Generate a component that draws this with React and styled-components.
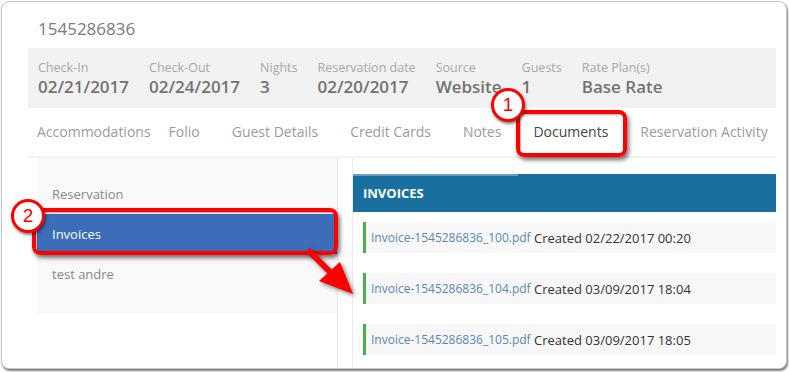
import React from 'react'
import styled, {createGlobalStyle} from 'styled-components'

const GlobalStyle = createGlobalStyle`
  body {
    margin: 0;
    background: #fff;
    font-family: "Open Sans", "Liberation Sans", sans-serif;
  }
`

const info = [
    {label: 'Check-In', value: '02/21/2017'},
    {label: 'Check-Out', value: '02/24/2017'},
    {label: 'Nights', value: '3'},
    {label: 'Reservation date', value: '02/20/2017'},
    {label: 'Source', value: 'Website'},
    {label: 'Guests', value: '1'},
    {label: 'Rate Plan(s)', value: 'Base Rate'},
]

const tabs = ['Accommodations', 'Folio', 'Guest Details', 'Credit Cards', 'Notes', 'Documents', 'Reservation Activity']

const invoices = [
    {file: 'Invoice-1545286836_100.pdf', created: '02/22/2017 00:20'},
    {file: 'Invoice-1545286836_104.pdf', created: '03/09/2017 18:04'},
    {file: 'Invoice-1545286836_105.pdf', created: '03/09/2017 18:05'},
]

export default function App(){
    return (
        <Page>
            <GlobalStyle/>
            <Card>
                <Content>
                    <Title>1545286836</Title>
                    <InfoBar>
                        {info.map(i => (
                            <InfoCol key={i.label}>
                                <Label>{i.label}</Label>
                                <Value>{i.value}</Value>
                            </InfoCol>
                        ))}
                    </InfoBar>
                    <Tabs>
                        {tabs.map(t => <Tab key={t} $active={t === 'Documents'}>{t}</Tab>)}
                    </Tabs>
                    <Body>
                        <SideCol>
                            <SideMenu>
                                <SideItem>Reservation</SideItem>
                                <SideItem $active>Invoices</SideItem>
                                <SideItem>test andre</SideItem>
                            </SideMenu>
                        </SideCol>
                        <Panel>
                            <PanelHeader>INVOICES</PanelHeader>
                            <InvoiceList>
                                {invoices.map(inv => (
                                    <InvoiceRow key={inv.file}>
                                        <FileLink>{inv.file}</FileLink> Created {inv.created}
                                    </InvoiceRow>
                                ))}
                            </InvoiceList>
                        </Panel>
                    </Body>
                </Content>
            </Card>

            <Callout $left={516} $top={110} $w={111} $h={47}/>
            <Callout $left={32} $top={208} $w={306} $h={47}/>
            <Badge $left={491} $top={88}>1</Badge>
            <Badge $left={11} $top={199}>2</Badge>
            <Arrow viewBox="0 0 80 70" width="80" height="70">
                <line x1="18" y1="10" x2="42" y2="34" stroke="#f00" strokeWidth="6"/>
                <polygon points="29,41 50,22 63,54" fill="#f00"/>
            </Arrow>
        </Page>
    )
}

const Page = styled.div`
  position: relative;
  width: 789px;
  height: 372px;
  padding: 1px 0 0 1px;
  box-sizing: border-box;
  overflow: hidden;
`

const Card = styled.div`
  width: 786px;
  height: 368px;
  box-sizing: border-box;
  border: 1px solid #c6c6c6;
  border-radius: 8px;
  box-shadow: 1px 2px 2px rgba(0,0,0,0.5);
  background: #fff;
  overflow: hidden;
`

const Content = styled.div`
  margin-left: 26px;
  width: 748px;
  height: 100%;
  display: flex;
  flex-direction: column;
`

const Title = styled.div`
  height: 46px;
  box-sizing: border-box;
  padding: 6px 0 0 10px;
  display: flex;
  align-items: center;
  font-size: 17px;
  color: #7a7a7a;
`

const InfoBar = styled.div`
  height: 60px;
  box-sizing: border-box;
  background: #f2f2f2;
  padding: 12px 10px 0;
  display: flex;
  gap: 20px;
`

const InfoCol = styled.div`
  display: flex;
  flex-direction: column;
`

const Label = styled.div`
  font-size: 12.5px;
  line-height: 16px;
  color: #a8a8a8;
`

const Value = styled.div`
  font-size: 17px;
  font-weight: 600;
  line-height: 22px;
  color: #727272;
`

const Tabs = styled.div`
  height: 50px;
  box-sizing: border-box;
  padding-bottom: 2px;
  border-bottom: 2px solid #f3f3f3;
  display: flex;
  align-items: center;
`

const Tab = styled.div`
  padding: 0 16px;
  font-size: 14px;
  color: ${p => p.$active ? '#444' : '#9b9b9b'};
  white-space: nowrap;

  &:first-child {
    padding-left: 9px;
    padding-right: 2px;
  }
`

const Body = styled.div`
  flex: 1;
  display: flex;
`

const SideCol = styled.div`
  margin-left: 9px;
  width: 301px;
  box-sizing: border-box;
  border-right: 1px solid #e6e6e6;
`

const SideMenu = styled.div`
  background: #f9f9f9;
  padding: 16px 0 19px;
`

const SideItem = styled.div`
  height: 40px;
  padding-left: 15px;
  display: flex;
  align-items: center;
  font-size: 13px;
  color: ${p => p.$active ? '#fff' : '#888'};
  background: ${p => p.$active ? '#3b6db8' : 'transparent'};
`

const Panel = styled.div`
  flex: 1;
  margin-left: 14px;
  border-left: 1px solid #ececec;
  padding-top: 16px;
`

const PanelHeader = styled.div`
  position: relative;
  height: 38px;
  padding-left: 10px;
  display: flex;
  align-items: center;
  background: #19709f;
  color: #fff;
  font-size: 13px;
  font-weight: 700;

  &::before {
    content: '';
    position: absolute;
    left: 0;
    top: 0;
    width: 165px;
    height: 2px;
    background: #6a9fc2;
  }
`

const InvoiceList = styled.div`
  padding: 10px 0 0 10px;
  display: flex;
  flex-direction: column;
  gap: 20px;
`

const InvoiceRow = styled.div`
  height: 31px;
  box-sizing: border-box;
  padding-left: 5px;
  border-left: 3px solid #4cae50;
  background: #f7f7f7;
  display: flex;
  align-items: center;
  font-size: 13px;
  color: #333;
  white-space: pre;
`

const FileLink = styled.span`
  font-size: 12px;
  color: #5b86b8;
`

const Callout = styled.div`
  position: absolute;
  left: ${p => p.$left}px;
  top: ${p => p.$top}px;
  width: ${p => p.$w}px;
  height: ${p => p.$h}px;
  box-sizing: border-box;
  border: 4px solid #f00;
  border-radius: 8px;
  box-shadow: 2px 3px 4px rgba(0,0,0,0.55), inset 1px 1px 2px rgba(0,0,0,0.35);
`

const Badge = styled.div`
  position: absolute;
  left: ${p => p.$left}px;
  top: ${p => p.$top}px;
  width: 34px;
  height: 34px;
  box-sizing: border-box;
  border: 3px solid #f00;
  border-radius: 50%;
  background: #fff;
  box-shadow: 1px 2px 3px rgba(0,0,0,0.5);
  display: flex;
  align-items: center;
  justify-content: center;
  font-family: "Liberation Sans", Arial, sans-serif;
  font-size: 19px;
  color: #f00;
`

const Arrow = styled.svg`
  position: absolute;
  left: 290px;
  top: 240px;
  filter: drop-shadow(2px 2px 2px rgba(0,0,0,0.5));
`
